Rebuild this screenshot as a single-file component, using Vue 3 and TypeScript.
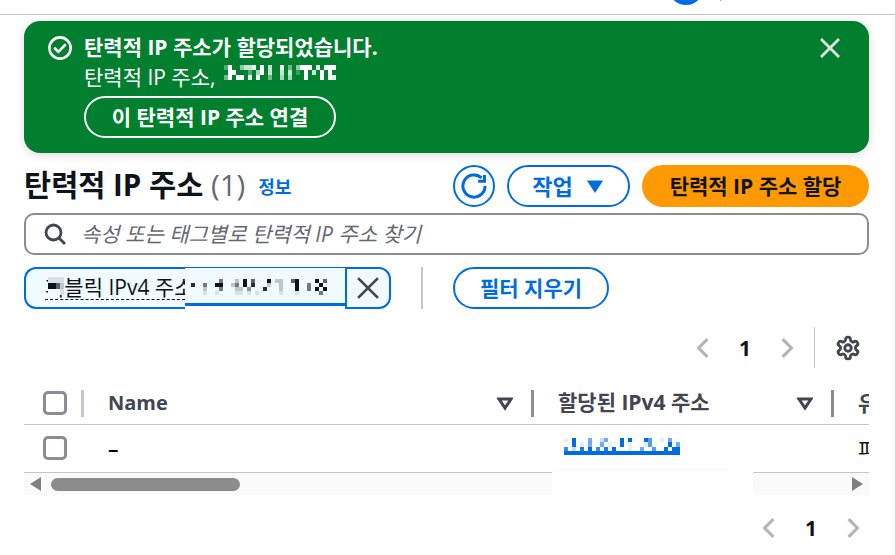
<script setup lang="ts">
interface Cell { x: number; y: number; o: number }

function cells(rows: string[]): Cell[] {
  const out: Cell[] = []
  rows.forEach((row, y) => {
    row.split('').forEach((c, x) => {
      if (c !== '.') out.push({ x, y, o: Number(c) / 9 })
    })
  })
  return out
}

const bannerIp = cells([
  '39..5778.9.7..9.4.5999.8.999',
  '.99...3.69.7..7.7.2.9.7.9.9.',
  '49.99.8.9..4..6.6...9...9.98'
])
const tokenIp = cells([
  '........5...2.9.6...9.22..69....9.6',
  '.8..5..99..25.9.8...2..2...9..5..9',
  '....2...5...22.4...8...2...9..5.9.9',
  '....1..1....11.1.1.....1...1.....5.'
])
const tokenHead = cells(['1111', '9962', '...1'])
const linkIp = cells([
  '1.9...5..25...9.9...96..1.5..',
  '..9.1.5..5.1..9.1...16....9.5',
  '7.2.8.9.7.8.9...1..5..6..9.99'
])
const gearPath =
  'M12.22 2h-.44a2 2 0 0 0-2 2v.18a2 2 0 0 1-1 1.73l-.43.25a2 2 0 0 1-2 0l-.15-.08a2 2 0 0 0-2.73.73l-.22.38a2 2 0 0 0 .73 2.73l.15.1a2 2 0 0 1 1 1.72v.51a2 2 0 0 1-1 1.74l-.15.09a2 2 0 0 0-.73 2.73l.22.38a2 2 0 0 0 2.73.73l.15-.08a2 2 0 0 1 2 0l.43.25a2 2 0 0 1 1 1.73V20a2 2 0 0 0 2 2h.44a2 2 0 0 0 2-2v-.18a2 2 0 0 1 1-1.73l.43-.25a2 2 0 0 1 2 0l.15.08a2 2 0 0 0 2.73-.73l.22-.39a2 2 0 0 0-.73-2.73l-.15-.08a2 2 0 0 1-1-1.74v-.5a2 2 0 0 1 1-1.74l.15-.09a2 2 0 0 0 .73-2.73l-.22-.38a2 2 0 0 0-2.73-.73l-.15.08a2 2 0 0 1-2 0l-.43-.25a2 2 0 0 1-1-1.73V4a2 2 0 0 0-2-2z'
</script>

<template>
  <div class="page">
    <header class="top"><span class="avatar"></span><span class="tick"></span></header>
    <main class="main">
      <section class="banner">
        <svg class="check" viewBox="0 0 24 24" fill="none" stroke="#fff" stroke-width="2.6">
          <circle cx="12" cy="12" r="10.6" />
          <path d="M7 12.5l3.4 3.4L17 9" stroke-linecap="round" stroke-linejoin="round" />
        </svg>
        <div class="banner-body">
          <div class="banner-title">탄력적 IP 주소가 할당되었습니다.</div>
          <div class="banner-sub">
            <span class="sub-text">탄력적 IP 주소,</span>
            <svg class="m-banner" width="112" height="15" shape-rendering="crispEdges">
              <rect v-for="(c, i) in bannerIp" :key="i" :x="c.x * 4" :y="c.y * 5" width="4" height="5" fill="#fff" :fill-opacity="c.o" />
            </svg>
          </div>
          <button class="banner-btn">이 탄력적 IP 주소 연결</button>
        </div>
        <svg class="close" viewBox="0 0 20 20" fill="none" stroke="#e4e4e4" stroke-width="2.8">
          <path d="M1 1l18 18M19 1L1 19" />
        </svg>
      </section>

      <div class="head">
        <h1 class="title">탄력적 IP 주소 <span class="count">(1)</span></h1>
        <a class="info">정보</a>
        <div class="actions">
          <button class="icon-btn">
            <svg viewBox="0 0 24 24" width="28" height="28" fill="none" stroke="#006ce0" stroke-width="2.6">
              <path d="M21.5 12a9.5 9.5 0 1 1-3-6.9" />
              <path d="M21 2.5V8h-5.5" stroke-linejoin="miter" />
            </svg>
          </button>
          <button class="btn act"><span class="act-label">작업</span>
            <svg viewBox="0 0 16 16" width="20" height="20"><path d="M1.5 3.5h13L8 13.5z" fill="#006ce0" /></svg>
          </button>
          <button class="btn primary">탄력적 IP 주소 할당</button>
        </div>
      </div>

      <div class="search">
        <svg viewBox="0 0 24 24" width="24" height="24" fill="none" stroke="#414750" stroke-width="2.8">
          <circle cx="10.5" cy="10.5" r="7.5" /><path d="M16 16l6 6" />
        </svg>
        <span class="placeholder">속성 또는 태그별로 탄력적 IP 주소 찾기</span>
      </div>

      <div class="filters">
        <div class="token">
          <div class="token-label">
            <span class="token-text">퍼블릭 IPv4 주소</span>
            <svg class="m-head" width="16" height="18" shape-rendering="crispEdges">
              <rect width="16" height="18" fill="#f0fbff" />
              <rect v-for="(c, i) in tokenHead" :key="i" :x="c.x * 4" :y="c.y * 6" width="4" height="6" fill="#0f141a" :fill-opacity="c.o" />
            </svg>
          </div>
          <div class="token-mid">
            <svg width="150" height="20" shape-rendering="crispEdges">
              <rect v-for="(c, i) in tokenIp" :key="i" :x="c.x * 4" :y="c.y * 4" width="4" height="4" fill="#0f141a" :fill-opacity="c.o" />
            </svg>
          </div>
          <div class="token-x">
            <svg viewBox="0 0 20 20" width="22" height="22" fill="none" stroke="#414750" stroke-width="2.5">
              <path d="M1 1l18 18M19 1L1 19" />
            </svg>
          </div>
        </div>
        <span class="sep"></span>
        <button class="btn clear">필터 지우기</button>
      </div>

      <div class="pager-row">
        <div class="pager">
          <svg class="chev" viewBox="0 0 12 20"><path d="M10 2L2 10l8 8" /></svg>
          <span class="page-no">1</span>
          <svg class="chev" viewBox="0 0 12 20"><path d="M2 2l8 8-8 8" /></svg>
        </div>
        <span class="pager-sep"></span>
        <svg class="gear" viewBox="0 0 24 24" fill="none" stroke="#424650" stroke-width="2.6" stroke-linejoin="round">
          <path :d="gearPath" /><circle cx="12" cy="12" r="3" />
        </svg>
      </div>

      <div class="table-wrap">
        <div class="tr th">
          <div class="c-check"><span class="box"></span><i class="bar light"></i></div>
          <div class="c-name">
            <span class="name-label">Name</span>
            <svg class="sort" viewBox="0 0 16 14"><path d="M2 2h12L8 11z" /></svg>
            <i class="bar"></i>
          </div>
          <div class="c-ip">
            <span class="ip-label">할당된 IPv4 주소</span>
            <svg class="sort" viewBox="0 0 16 14"><path d="M2 2h12L8 11z" /></svg>
            <i class="bar"></i>
          </div>
          <div class="c-type">유형</div>
        </div>
        <div class="tr td">
          <div class="c-check"><span class="box"></span></div>
          <div class="c-name dash">–</div>
          <div class="c-ip">
            <svg class="m-link" width="116" height="17" shape-rendering="crispEdges">
              <rect v-for="(c, i) in linkIp" :key="i" :x="c.x * 4" :y="c.y * 4.3" width="4" height="4.3" fill="#006ce0" :fill-opacity="c.o" />
              <rect y="13" width="116" height="4" fill="#006ce0" />
            </svg>
          </div>
          <div class="c-type">퍼블릭 IP</div>
        </div>
        <div class="scroll">
          <svg class="arrow" viewBox="0 0 11 14"><path d="M11 0v14L0 7z" /></svg>
          <span class="thumb"></span>
          <svg class="arrow right" viewBox="0 0 11 14"><path d="M0 0v14l11-7z" /></svg>
        </div>
        <span class="patch"></span>
      </div>

      <div class="pager bottom">
        <svg class="chev" viewBox="0 0 12 20"><path d="M10 2L2 10l8 8" /></svg>
        <span class="page-no">1</span>
        <svg class="chev" viewBox="0 0 12 20"><path d="M2 2l8 8-8 8" /></svg>
      </div>
    </main>
  </div>
</template>

<style scoped>
* { box-sizing: border-box; }
.page {
  position: relative;
  width: 895px;
  height: 555px;
  overflow: hidden;
  background: linear-gradient(90deg, #fff 892px, #fcfcfc 892px);
  color: #0f141a;
  font-family: "Open Sans", "Noto Sans CJK KR", sans-serif;
}
.top {
  height: 15px;
  border-bottom: 1px solid #c6c6cd;
  background: #fff;
  overflow: hidden;
  display: flex;
  justify-content: flex-end;
  padding-right: 174px;
}
.avatar {
  width: 36px;
  height: 36px;
  margin-top: -31px;
  border-radius: 50%;
  background: #006ce0;
}
.tick { width: 1px; height: 1px; margin-left: 16px; background: #9a9aa2; }
.main {
  width: 845px;
  margin-left: 24px;
  display: flex;
  flex-direction: column;
}
.banner {
  margin-top: 6px;
  height: 132px;
  border-radius: 16px;
  background: #00802f;
  color: #fff;
  display: flex;
  padding: 15px 29px 0 24px;
  box-shadow: 0 2px 10px rgba(0, 7, 22, 0.14);
}
.check { width: 24px; height: 24px; flex: none; }
.banner-body { margin-left: 12px; flex: 1; }
.banner-title { font-size: 21px; font-weight: 700; line-height: 24px; margin-top: -1px; }
.banner-sub { display: flex; align-items: flex-start; font-size: 21px; line-height: 24px; margin-top: 6px; height: 28px; }
.sub-text { width: 140px; white-space: nowrap; }
.banner-btn {
  margin-top: 3px;
  width: 252px;
  height: 42px;
  border: 2px solid #fff;
  border-radius: 21px;
  background: transparent;
  color: #fff;
  font: 700 21px/24px "Open Sans", "Noto Sans CJK KR", sans-serif;
  padding: 0;
}
.close { width: 20px; height: 20px; margin-top: 2px; flex: none; }

.head { display: flex; align-items: center; height: 42px; margin-top: 12px; }
.title { margin: 0; font-size: 29.5px; line-height: 38px; font-weight: 700; margin-top: -2px; white-space: nowrap; }
.count { font-weight: 400; color: #656871; }
.info { color: #006ce0; font-size: 18px; font-weight: 700; margin-left: 13px; }
.actions { margin-left: auto; display: flex; gap: 12px; }
.icon-btn {
  width: 42px; height: 42px; border-radius: 50%;
  border: 2px solid #006ce0; background: #fff; padding: 0;
  display: flex; align-items: center; justify-content: center;
}
.btn {
  height: 42px;
  border-radius: 21px;
  font: 700 21px/24px "Open Sans", "Noto Sans CJK KR", sans-serif;
  padding: 0;
  display: flex;
  align-items: center;
  justify-content: center;
}
.act { width: 123px; border: 2px solid #006ce0; background: #fff; color: #006ce0; gap: 12px; }
.act-label { font-size: 22px; }
.primary { width: 227px; border: 0; background: #ff9900; color: #0f141a; }

.search {
  margin-top: 6px;
  height: 42px;
  border: 2px solid #8c8c94;
  border-radius: 10px;
  display: flex;
  align-items: center;
  padding-left: 17px;
}
.placeholder { margin-left: 14px; margin-top: -2px; font-size: 21px; font-style: italic; color: #656871; white-space: nowrap; }

.filters { margin-top: 12px; display: flex; align-items: flex-start; height: 42px; }
.token { display: flex; width: 367px; height: 42px; }
.token-label {
  position: relative;
  width: 161px;
  height: 42px;
  overflow: hidden;
  background: #f0fbff;
  border: 2px solid #006ce0;
  border-right: 0;
  border-radius: 12px 0 0 12px;
  padding: 5px 0 0 19px;
  white-space: nowrap;
  font-size: 21px;
  line-height: 26px;
}
.token-text { display: inline-block; width: 200px; }
.token-label::after {
  content: "";
  position: absolute;
  left: 19px;
  right: 0;
  bottom: 7px;
  border-bottom: 1px dashed #0f141a;
}
.m-head { position: absolute; left: 22px; top: 8px; }
.token-mid {
  width: 160px;
  height: 39px;
  background: #f0fbff;
  border-top: 1px solid #006ce0;
  border-bottom: 3px solid #006ce0;
  padding: 11px 0 0 2px;
}
.token-x {
  width: 46px;
  height: 42px;
  background: #f0fbff;
  border: 2px solid #006ce0;
  border-radius: 0 12px 12px 0;
  display: flex;
  align-items: center;
  justify-content: center;
}
.sep { width: 2px; height: 42px; margin-left: 30px; background: #c6c6cd; }
.clear { margin-left: 30px; width: 156px; border: 2px solid #006ce0; background: #fff; color: #006ce0; }

.pager-row { display: flex; align-items: center; justify-content: flex-end; height: 41px; margin-top: 18px; }
.pager { display: flex; align-items: center; }
.chev { width: 14px; height: 22px; fill: none; stroke: #b4b4bb; stroke-width: 2.8; }
.page-no { font-size: 21px; font-weight: 700; width: 70px; text-align: center; }
.pager-sep { width: 1px; height: 41px; background: #c6c6cd; margin-left: 20px; }
.gear { width: 26px; height: 26px; margin: 0 8px 0 20px; }

.table-wrap { position: relative; margin-top: 12px; width: 845px; overflow: hidden; }
.tr { display: grid; grid-template-columns: 60px 450px 300px 35px; white-space: nowrap; }
.th { height: 45px; border-bottom: 1px solid #c6c6cd; font-weight: 700; font-size: 21px; color: #424650; padding-top: 10px; }
.td { height: 48px; border-bottom: 1px solid #c6c6cd; font-size: 21px; align-items: center; }
.th > div { display: flex; align-items: center; height: 27px; position: relative; }
.c-check { padding-left: 19px; position: relative; }
.box { display: block; width: 24px; height: 24px; margin-top: -2px; border: 3px solid #8c8c94; border-radius: 5px; }
.bar { position: absolute; right: 0; top: 0; width: 3px; height: 27px; background: #8c8c94; }
.bar.light { background: #c6c6cd; }
.c-name, .c-ip { padding-left: 24px; }
.name-label { font-size: 20px; margin-top: -2px; }
.ip-label { margin-top: -5px; }
.dash { font-weight: 600; color: #000; }
.sort {
  position: absolute;
  right: 21px;
  top: 7px;
  width: 16px;
  height: 14px;
  fill: none;
  stroke: #424650;
  stroke-width: 3;
}
.c-type { padding-left: 24px; overflow: hidden; margin-top: -2px; }
.m-link { display: block; margin-left: 6px; margin-top: -4px; }
.scroll {
  position: relative;
  height: 22px;
  background: #fafafa;
  display: flex;
  align-items: center;
  padding: 0 6px;
}
.arrow { width: 11px; height: 14px; fill: #808080; }
.arrow.right { margin-left: auto; }
.thumb { width: 189px; height: 13px; margin-left: 10px; border-radius: 7px; background: #8c8c8c; }
.patch {
  position: absolute;
  left: 528px;
  top: 91px;
  width: 201px;
  height: 24px;
  background: #fefefe;
}
.patch::before {
  content: "";
  position: absolute;
  left: 5px;
  top: -4px;
  width: 178px;
  height: 4px;
  background: #fdfdfd;
}
.bottom { justify-content: flex-end; margin-top: 22px; height: 22px; padding-right: 9px; }
</style>
